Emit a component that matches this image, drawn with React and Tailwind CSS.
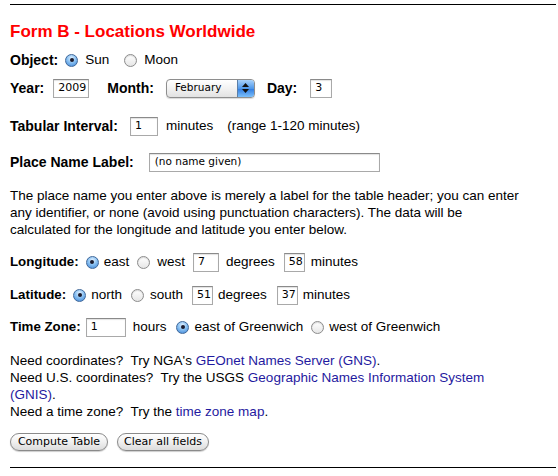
import React from 'react';

function Radio({ checked, className = '' }) {
  return checked ? (
    <span className={`inline-flex items-center justify-center w-[13px] h-[13px] rounded-full border border-[#40689a] bg-[radial-gradient(circle_at_50%_30%,#e4f2ff_0%,#8cc2f2_45%,#3a82d6_100%)] shrink-0 ${className}`}>
      <span className="w-[4px] h-[4px] rounded-full bg-[#1b1b2e]" />
    </span>
  ) : (
    <span className={`inline-block w-[13px] h-[13px] rounded-full border border-[#8c8c8c] bg-[linear-gradient(#ffffff,#e6e6e6)] shadow-[inset_0_1px_1px_rgba(0,0,0,0.15)] shrink-0 ${className}`} />
  );
}

function Field({ value, w, className = '' }) {
  return (
    <span
      className={`inline-flex items-center h-[19px] pl-[4px] bg-white border border-[#a9a9a9] border-t-[#8a8a8a] shadow-[inset_0_1px_1px_rgba(0,0,0,0.12)] text-[11px] text-black shrink-0 ${w} ${className}`}
      style={{ fontFamily: '"DejaVu Sans", sans-serif' }}
    >
      {value}
    </span>
  );
}

function Btn({ children, w }) {
  return (
    <span
      className={`inline-flex items-center justify-center h-[18px] rounded-full border border-[#8a8a8a] bg-[linear-gradient(#ffffff,#f0f0f0_50%,#dcdcdc)] shadow-[0_1px_1px_rgba(0,0,0,0.2)] text-[11px] text-black ${w}`}
      style={{ fontFamily: '"DejaVu Sans", sans-serif' }}
    >
      {children}
    </span>
  );
}

function Label({ children, className = 'text-[14px]' }) {
  return <b className={`font-bold ${className}`}>{children}</b>;
}

export default function App() {
  const link = 'text-[#1f1aa0]';
  return (
    <div
      className="w-[558px] h-[476px] bg-white text-black text-[13.5px] overflow-hidden"
      style={{ fontFamily: '"Liberation Sans", Arial, sans-serif' }}
    >
      <div className="pl-[10px] pr-[2px] flex flex-col">
        <div className="mt-[4px] h-px bg-black" />

        <div className="mt-[17px] h-[20px] flex items-center text-[17px] font-bold text-[#ff0000]">
          Form B - Locations Worldwide
        </div>

        {/* object */}
        <div className="mt-[8px] h-[20px] flex items-center">
          <Label>Object:</Label>
          <Radio checked className="ml-[7px]" />
          <span className="ml-[7px]">Sun</span>
          <Radio className="ml-[15px]" />
          <span className="ml-[7px]">Moon</span>
        </div>

        {/* date */}
        <div className="mt-[8px] h-[20px] flex items-center">
          <Label>Year:</Label>
          <Field value="2009" w="w-[36px]" className="ml-[9px]" />
          <Label className="text-[14px] ml-[18px]">Month:</Label>
          <span
            className="ml-[12px] w-[89px] h-[19px] flex items-center rounded-[4px] border border-[#8e8e8e] bg-[linear-gradient(#ffffff,#f2f2f2_50%,#e2e2e2)] shadow-[0_1px_1px_rgba(0,0,0,0.15)] overflow-hidden text-[10.5px]"
            style={{ fontFamily: '"DejaVu Sans", sans-serif' }}
          >
            <span className="flex-1 pl-[8px]">February</span>
            <span className="w-[17px] h-full flex flex-col items-center justify-center gap-[2px] bg-[linear-gradient(#a9d2fb,#4f98ea_50%,#2f7ae0_51%,#7cc0fb)] border-l border-[#5b7fa8]">
              <svg width="7" height="4" viewBox="0 0 7 4"><path d="M0 4 L3.5 0 L7 4 Z" fill="#111" /></svg>
              <svg width="7" height="4" viewBox="0 0 7 4"><path d="M0 0 L3.5 4 L7 0 Z" fill="#111" /></svg>
            </span>
          </span>
          <Label className="text-[14px] ml-[12px]">Day:</Label>
          <Field value="3" w="w-[22px]" className="ml-[13px]" />
        </div>

        {/* interval */}
        <div className="mt-[18px] h-[20px] flex items-center">
          <Label>Tabular Interval:</Label>
          <Field value="1" w="w-[28px]" className="ml-[12px]" />
          <span className="ml-[8px]">minutes</span>
          <span className="ml-[14px]">(range 1-120 minutes)</span>
        </div>

        {/* place */}
        <div className="mt-[16px] h-[20px] flex items-center">
          <Label>Place Name Label:</Label>
          <span
            className="ml-[15px] w-[231px] h-[19px] flex items-center pl-[5px] bg-white border border-[#a9a9a9] border-t-[#8a8a8a] shadow-[inset_0_1px_1px_rgba(0,0,0,0.12)] text-[10.5px]"
            style={{ fontFamily: '"DejaVu Sans", sans-serif' }}
          >
            (no name given)
          </span>
        </div>

        <p className="mt-[15px] leading-[17px]">
          The place name you enter above is merely a label for the table header; you can enter<br />
          any identifier, or none (avoid using punctuation characters). The data will be<br />
          calculated for the longitude and latitude you enter below.
        </p>

        {/* longitude */}
        <div className="mt-[14px] h-[20px] flex items-center">
          <Label className="text-[13.3px]">Longitude:</Label>
          <Radio checked className="ml-[7px]" />
          <span className="ml-[5px]">east</span>
          <Radio className="ml-[8px]" />
          <span className="ml-[7px]">west</span>
          <Field value="7" w="w-[26px]" className="ml-[8px]" />
          <span className="ml-[7px]">degrees</span>
          <Field value="58" w="w-[21px]" className="ml-[9px]" />
          <span className="ml-[6px]">minutes</span>
        </div>

        {/* latitude */}
        <div className="mt-[13px] h-[20px] flex items-center">
          <Label className="text-[13.3px]">Latitude:</Label>
          <Radio checked className="ml-[7px]" />
          <span className="ml-[5px]">north</span>
          <Radio className="ml-[9px]" />
          <span className="ml-[6px]">south</span>
          <Field value="51" w="w-[21px]" className="ml-[9px]" />
          <span className="ml-[5px]">degrees</span>
          <Field value="37" w="w-[21px]" className="ml-[10px]" />
          <span className="ml-[5px]">minutes</span>
        </div>

        {/* time zone */}
        <div className="mt-[12px] h-[20px] flex items-center">
          <Label className="text-[13.3px]">Time Zone:</Label>
          <Field value="1" w="w-[40px]" className="ml-[5px]" />
          <span className="ml-[7px]">hours</span>
          <Radio checked className="ml-[10px]" />
          <span className="ml-[5px]">east of Greenwich</span>
          <Radio className="ml-[8px]" />
          <span className="ml-[5px]">west of Greenwich</span>
        </div>

        <div className="mt-[15px] leading-[17px]">
          <div>
            Need coordinates?&nbsp; Try NGA's <span className={link}>GEOnet Names Server (GNS)</span>.
          </div>
          <div>
            Need U.S. coordinates?&nbsp; Try the USGS <span className={link}>Geographic Names Information System</span>
          </div>
          <div>
            <span className={link}>(GNIS)</span>.
          </div>
          <div>
            Need a time zone?&nbsp; Try the <span className={link}>time zone map</span>.
          </div>
        </div>

        <div className="mt-[13px] flex items-center gap-[9px]">
          <Btn w="w-[98px]">Compute Table</Btn>
          <Btn w="w-[92px]">Clear all fields</Btn>
        </div>

        <div className="mt-[16px] h-px bg-black" />
      </div>
    </div>
  );
}
